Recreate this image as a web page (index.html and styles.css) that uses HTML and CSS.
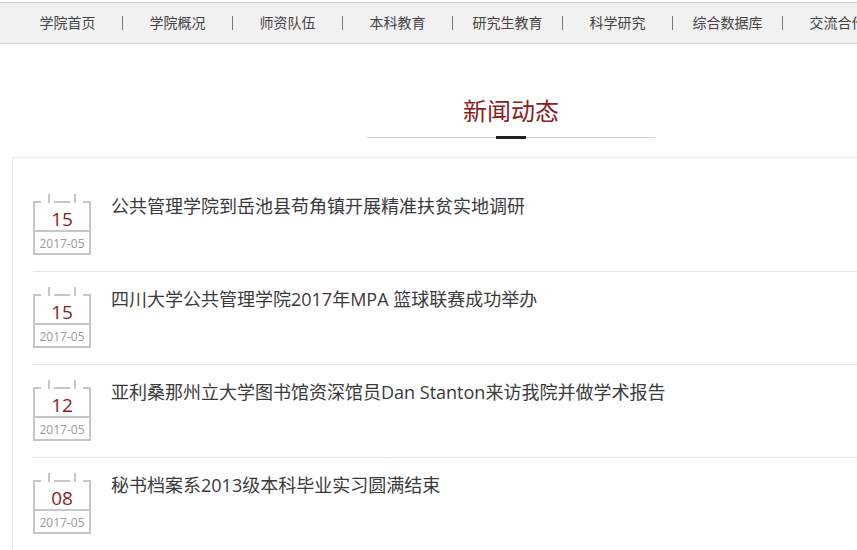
FILE: index.html
```html
<!DOCTYPE html>
<html lang="zh-CN">
<head>
<meta charset="utf-8">
<title>新闻动态</title>
<link rel="stylesheet" href="styles.css">
</head>
<body>
<div class="page">
  <nav class="nav">
    <ul class="nav-list">
      <li class="nav-item">学院首页</li><li class="nav-sep"></li>
      <li class="nav-item">学院概况</li><li class="nav-sep"></li>
      <li class="nav-item">师资队伍</li><li class="nav-sep"></li>
      <li class="nav-item">本科教育</li><li class="nav-sep"></li>
      <li class="nav-item">研究生教育</li><li class="nav-sep"></li>
      <li class="nav-item">科学研究</li><li class="nav-sep"></li>
      <li class="nav-item">综合数据库</li><li class="nav-sep"></li>
      <li class="nav-item">交流合作</li>
    </ul>
  </nav>

  <main class="main">
    <div class="heading">
      <h2 class="heading-title">新闻动态</h2>
      <div class="heading-line"><span class="heading-bar"></span></div>
    </div>

    <section class="news-box">
      <ul class="news-list">
        <li class="news-item">
          <div class="cal">
            <svg class="cal-top" width="58" height="9" viewBox="0 0 58 9">
              <g fill="#c6c6c6">
                <rect x="0" y="7" width="8" height="2"/>
                <rect x="15" y="0" width="2" height="9"/>
                <rect x="21" y="7" width="16" height="2"/>
                <rect x="41" y="0" width="2" height="9"/>
                <rect x="50" y="7" width="8" height="2"/>
              </g>
            </svg>
            <div class="cal-body">
              <div class="cal-day">15</div>
              <div class="cal-date">2017-05</div>
            </div>
          </div>
          <a class="news-title">公共管理学院到岳池县苟角镇开展精准扶贫实地调研</a>
        </li>
        <li class="news-item">
          <div class="cal">
            <svg class="cal-top" width="58" height="9" viewBox="0 0 58 9">
              <g fill="#c6c6c6">
                <rect x="0" y="7" width="8" height="2"/>
                <rect x="15" y="0" width="2" height="9"/>
                <rect x="21" y="7" width="16" height="2"/>
                <rect x="41" y="0" width="2" height="9"/>
                <rect x="50" y="7" width="8" height="2"/>
              </g>
            </svg>
            <div class="cal-body">
              <div class="cal-day">15</div>
              <div class="cal-date">2017-05</div>
            </div>
          </div>
          <a class="news-title">四川大学公共管理学院2017年MPA 篮球联赛成功举办</a>
        </li>
        <li class="news-item">
          <div class="cal">
            <svg class="cal-top" width="58" height="9" viewBox="0 0 58 9">
              <g fill="#c6c6c6">
                <rect x="0" y="7" width="8" height="2"/>
                <rect x="15" y="0" width="2" height="9"/>
                <rect x="21" y="7" width="16" height="2"/>
                <rect x="41" y="0" width="2" height="9"/>
                <rect x="50" y="7" width="8" height="2"/>
              </g>
            </svg>
            <div class="cal-body">
              <div class="cal-day">12</div>
              <div class="cal-date">2017-05</div>
            </div>
          </div>
          <a class="news-title">亚利桑那州立大学图书馆资深馆员Dan Stanton来访我院并做学术报告</a>
        </li>
        <li class="news-item">
          <div class="cal">
            <svg class="cal-top" width="58" height="9" viewBox="0 0 58 9">
              <g fill="#c6c6c6">
                <rect x="0" y="7" width="8" height="2"/>
                <rect x="15" y="0" width="2" height="9"/>
                <rect x="21" y="7" width="16" height="2"/>
                <rect x="41" y="0" width="2" height="9"/>
                <rect x="50" y="7" width="8" height="2"/>
              </g>
            </svg>
            <div class="cal-body">
              <div class="cal-day">08</div>
              <div class="cal-date">2017-05</div>
            </div>
          </div>
          <a class="news-title">秘书档案系2013级本科毕业实习圆满结束</a>
        </li>
      </ul>
    </section>
  </main>
</div>
</body>
</html>
```

FILE: styles.css
```css
* {
  box-sizing: border-box;
}

html, body {
  margin: 0;
  padding: 0;
  background: #fff;
  overflow: hidden;
}

body {
  font-family: "Open Sans", "Noto Sans CJK SC", sans-serif;
  color: #333;
}

.page {
  width: 857px;
  overflow: hidden;
}

/* Navigation */
.nav {
  margin-top: 2px;
  height: 42px;
  background: #f1f1f1;
  border-top: 1px solid #c9c9c9;
  border-bottom: 1px solid #d6d6d6;
  overflow: hidden;
}

.nav-list {
  list-style: none;
  margin: 0;
  padding: 0 0 0 13px;
  display: flex;
  align-items: center;
  height: 40px;
  white-space: nowrap;
}

.nav-item {
  flex: 0 0 109px;
  text-align: center;
  font-size: 14px;
  line-height: 40px;
  color: #444;
}

.nav-sep {
  flex: 0 0 1px;
  height: 14px;
  background: #777;
}

/* Main */
.main {
  width: 998px;
  margin-left: 12px;
}

.heading {
  display: flex;
  flex-direction: column;
  align-items: center;
  padding-top: 51px;
}

.heading-title {
  margin: 0;
  font-size: 24px;
  line-height: 32px;
  font-weight: normal;
  color: #8a1c22;
}

.heading-line {
  margin-top: 10px;
  width: 288px;
  height: 1px;
  background: #cfcfcf;
  display: flex;
  justify-content: center;
}

.heading-bar {
  width: 30px;
  height: 3px;
  margin-top: -1px;
  background: #222;
}

.news-box {
  margin-top: 19px;
  border-top: 1px solid #ebebeb;
  border-left: 1px solid #ebebeb;
  padding: 21px 0 0 20px;
}

.news-list {
  list-style: none;
  margin: 0;
  padding: 0;
}

.news-item {
  display: flex;
  align-items: flex-start;
  padding: 15px 0 16px;
  border-bottom: 1px solid #e6e6e6;
}

/* Calendar badge */
.cal {
  flex: 0 0 58px;
  width: 58px;
  display: flex;
  flex-direction: column;
}

.cal-top {
  display: block;
}

.cal-body {
  border: 2px solid #c6c6c6;
  border-top: none;
  height: 52px;
  display: flex;
  flex-direction: column;
}

.cal-day {
  height: 29px;
  padding-top: 4px;
  border-bottom: 2px solid #c6c6c6;
  text-align: center;
  font-size: 19px;
  line-height: 24px;
  color: #8a1c22;
}

.cal-date {
  flex: 1;
  padding-top: 4px;
  text-align: center;
  font-size: 12px;
  line-height: 16px;
  color: #9a9a9a;
}

.news-title {
  margin-left: 20px;
  margin-top: 1px;
  font-size: 18px;
  line-height: 22px;
  color: #3a3a3a;
  white-space: nowrap;
  text-decoration: none;
}
```
